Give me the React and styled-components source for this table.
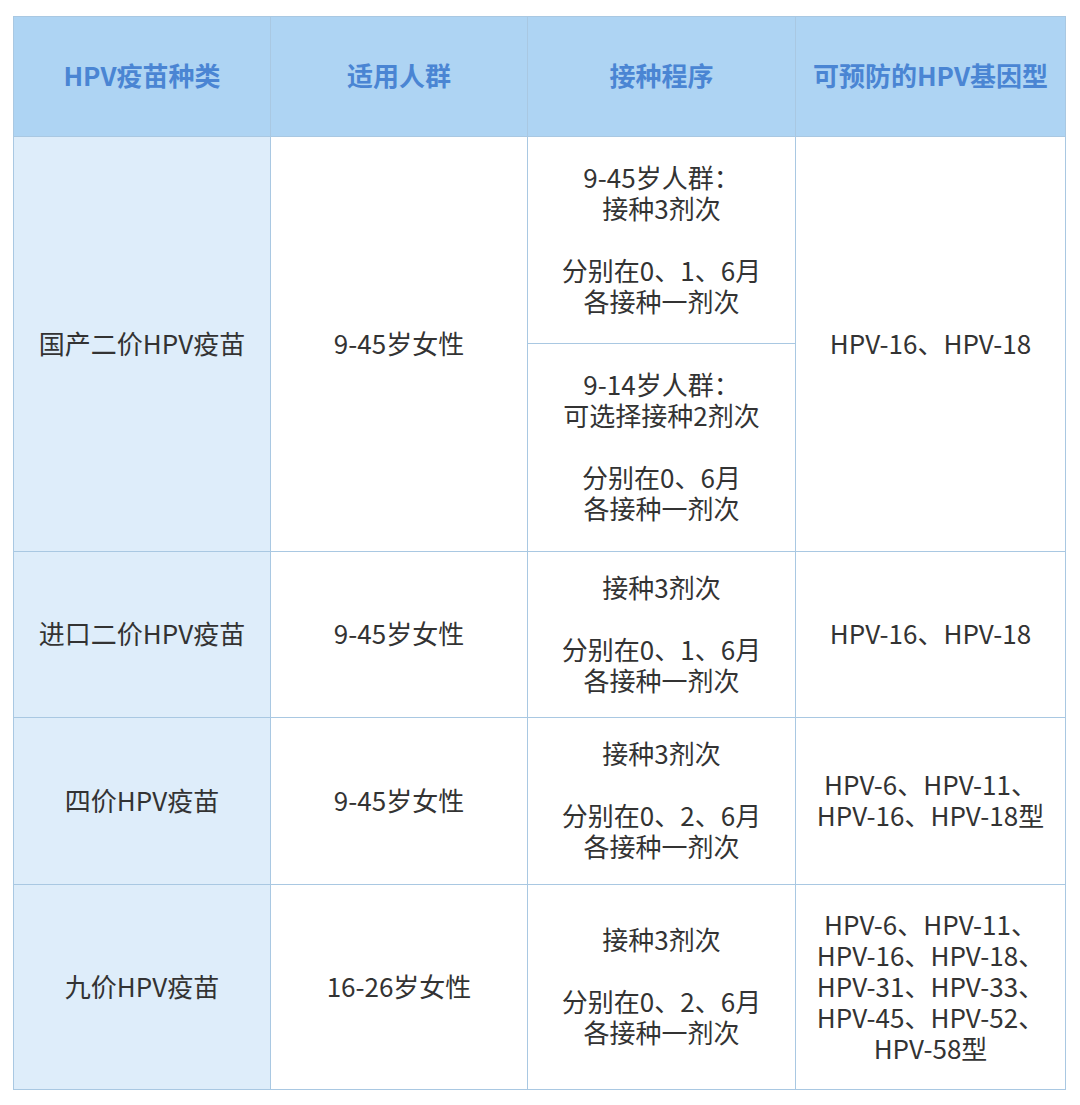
import React from "react";
import styled, { createGlobalStyle } from "styled-components";

const Global = createGlobalStyle`
  html, body { margin: 0; padding: 0; background: #ffffff; }
  body { font-family: "Noto Sans CJK SC", "Noto Sans", sans-serif; }
`;

const Page = styled.div`
  padding: 16px 0 0 13px;
  width: 1080px;
  height: 1105px;
  box-sizing: border-box;
`;

const Grid = styled.div`
  display: grid;
  grid-template-columns: 256px 256px 267px 269px;
  grid-template-rows: 119px 206px 207px 165px 166px 204px;
  gap: 1px;
  padding: 1px;
  width: max-content;
  background: #a9c8e2;
`;

const HeadCell = styled.div`
  display: flex;
  align-items: center;
  justify-content: center;
  padding-bottom: 4px;
  background: #aed4f3;
  color: #4a85d3;
  font-size: 26px;
  font-weight: 700;
  line-height: 31px;
  text-align: center;
`;

const Cell = styled.div`
  display: flex;
  align-items: center;
  justify-content: center;
  padding-bottom: 4px;
  text-align: center;
  white-space: pre-line;
  font-size: 26px;
  line-height: 31px;
  color: #333333;
  background: ${(p) => (p.$first ? "#deedfa" : "#ffffff")};
  grid-row: ${(p) => (p.$span ? `span ${p.$span}` : "auto")};
`;

const headers = ["HPV疫苗种类", "适用人群", "接种程序", "可预防的HPV基因型"];

const rows = [
  {
    name: "国产二价HPV疫苗",
    who: "9-45岁女性",
    schedule: [
      "9-45岁人群：\n接种3剂次\n\n分别在0、1、6月\n各接种一剂次",
      "9-14岁人群：\n可选择接种2剂次\n\n分别在0、6月\n各接种一剂次",
    ],
    types: "HPV-16、HPV-18",
  },
  {
    name: "进口二价HPV疫苗",
    who: "9-45岁女性",
    schedule: ["接种3剂次\n\n分别在0、1、6月\n各接种一剂次"],
    types: "HPV-16、HPV-18",
  },
  {
    name: "四价HPV疫苗",
    who: "9-45岁女性",
    schedule: ["接种3剂次\n\n分别在0、2、6月\n各接种一剂次"],
    types: "HPV-6、HPV-11、\nHPV-16、HPV-18型",
  },
  {
    name: "九价HPV疫苗",
    who: "16-26岁女性",
    schedule: ["接种3剂次\n\n分别在0、2、6月\n各接种一剂次"],
    types:
      "HPV-6、HPV-11、\nHPV-16、HPV-18、\nHPV-31、HPV-33、\nHPV-45、HPV-52、\nHPV-58型",
  },
];

export default function App() {
  return (
    <Page>
      <Global />
      <Grid>
        {headers.map((h) => (
          <HeadCell key={h}>{h}</HeadCell>
        ))}
        {rows.map((r) => {
          const span = r.schedule.length;
          return (
            <React.Fragment key={r.name}>
              <Cell $first $span={span}>{r.name}</Cell>
              <Cell $span={span}>{r.who}</Cell>
              <Cell>{r.schedule[0]}</Cell>
              <Cell $span={span}>{r.types}</Cell>
              {r.schedule.slice(1).map((s, i) => (
                <Cell key={i}>{s}</Cell>
              ))}
            </React.Fragment>
          );
        })}
      </Grid>
    </Page>
  );
}
